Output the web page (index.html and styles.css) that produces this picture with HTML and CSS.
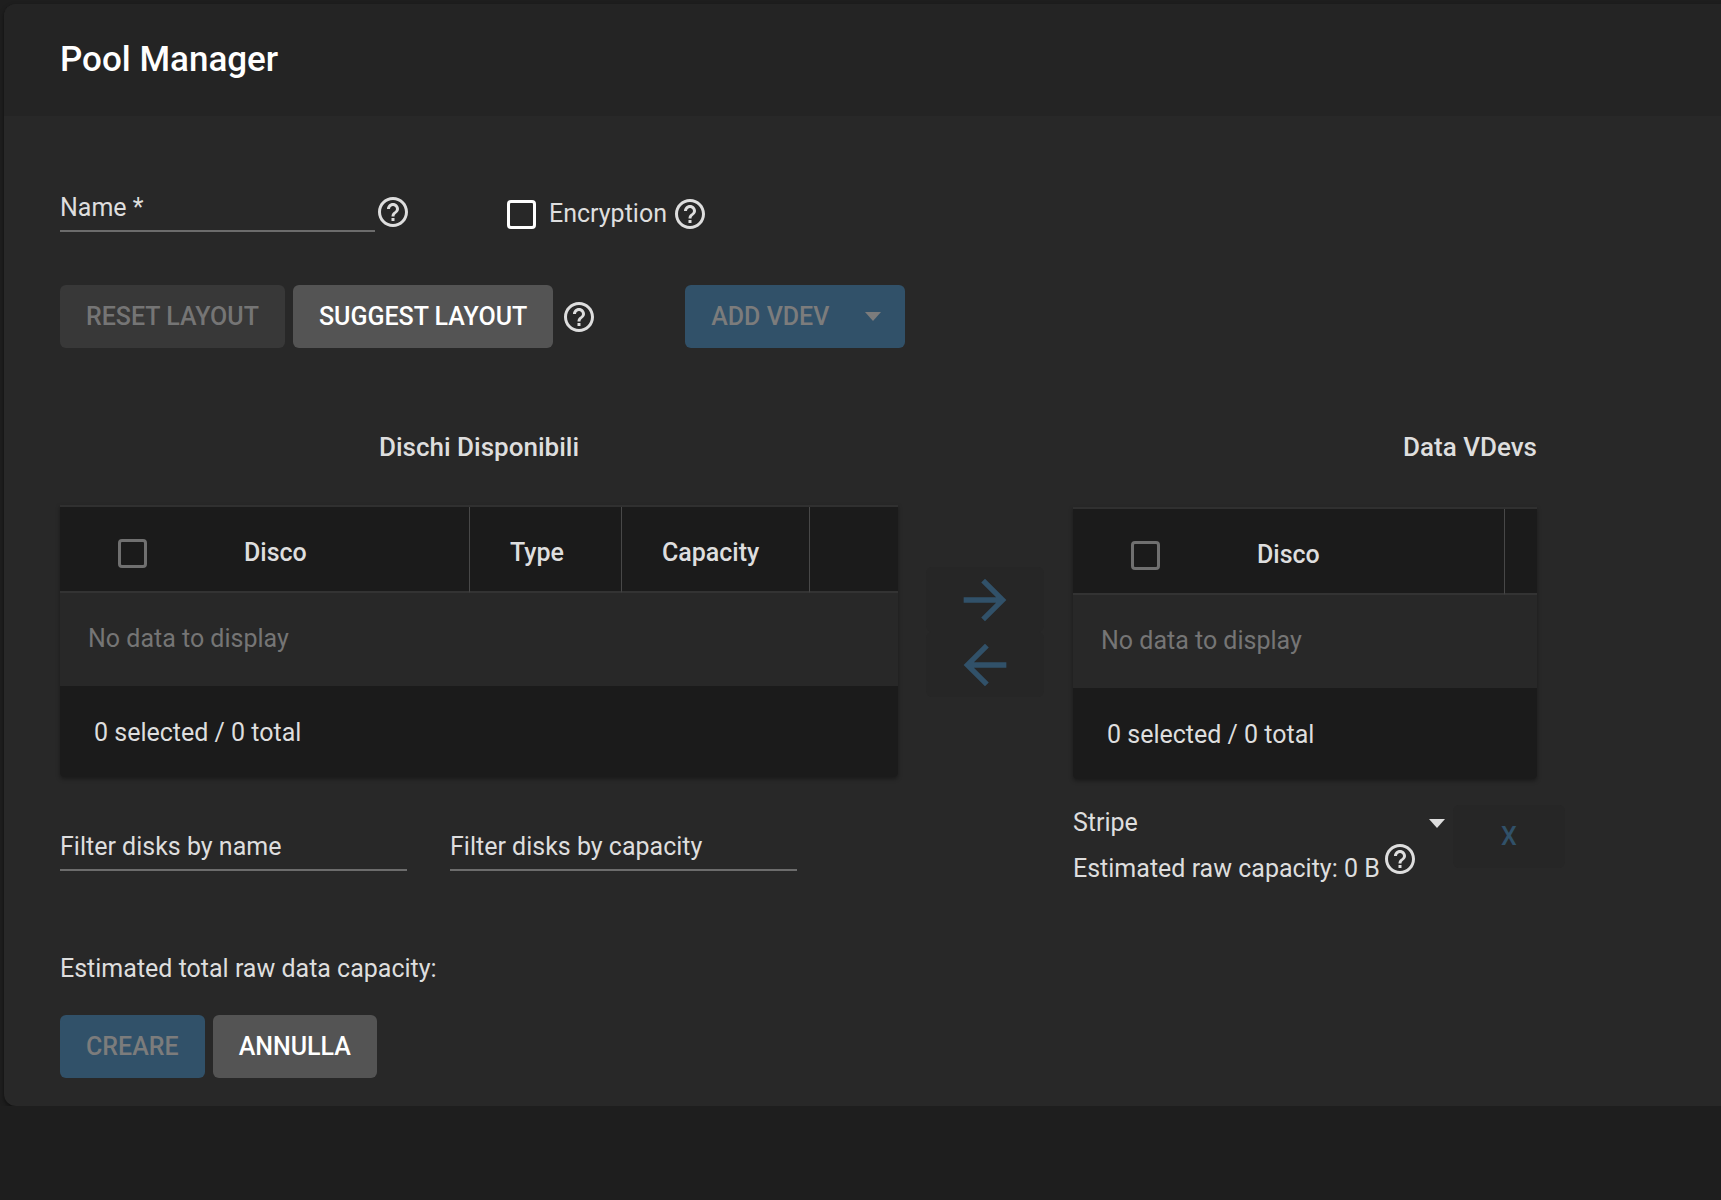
FILE: index.html
```html
<!DOCTYPE html>
<html lang="it">
<head>
<meta charset="utf-8">
<meta name="viewport" content="width=device-width, initial-scale=1">
<title>Pool Manager</title>
<link rel="stylesheet" href="styles.css">
</head>
<body>
<svg class="sprite" aria-hidden="true">
  <symbol id="help" viewBox="0 0 24 24"><path d="M11 18h2v-2h-2v2zm1-16C6.48 2 2 6.48 2 12s4.48 10 10 10 10-4.48 10-10S17.52 2 12 2zm0 18c-4.41 0-8-3.59-8-8s3.59-8 8-8 8 3.59 8 8-3.59 8-8 8zm0-14c-2.21 0-4 1.79-4 4h2c0-1.1.9-2 2-2s2 .9 2 2c0 2-3 1.75-3 5h2c0-2.25 3-2.5 3-5 0-2.21-1.79-4-4-4z"/></symbol>
  <symbol id="forward" viewBox="0 0 24 24"><path d="M12 4l-1.41 1.41L16.17 11H4v2h12.17l-5.58 5.59L12 20l8-8z"/></symbol>
  <symbol id="back" viewBox="0 0 24 24"><path d="M20 11H7.83l5.59-5.59L12 4l-8 8 8 8 1.41-1.41L7.83 13H20v-2z"/></symbol>
</svg>
<main class="card">
  <header class="card-header"><h1 class="title">Pool Manager</h1></header>
  <form class="card-body">
    <div class="name-row">
      <div class="field name-field">
        <label class="field-label" for="name">Name *</label>
        <input class="field-input" id="name" type="text" required>
      </div>
      <button class="help" type="button" aria-label="Name"><svg class="help-icon"><use href="#help"/></svg></button>
      <div class="encryption">
        <input class="check check-bright" id="encryption" type="checkbox">
        <label class="check-label" for="encryption">Encryption</label>
        <button class="help" type="button" aria-label="Encryption"><svg class="help-icon"><use href="#help"/></svg></button>
      </div>
    </div>

    <div class="layout-row">
      <button class="btn btn-muted" type="button" disabled>RESET LAYOUT</button>
      <button class="btn btn-default" type="button">SUGGEST LAYOUT</button>
      <button class="help" type="button" aria-label="Suggest layout"><svg class="help-icon"><use href="#help"/></svg></button>
      <button class="btn btn-primary add-vdev" type="button" disabled>ADD VDEV <span class="caret"></span></button>
    </div>

    <div class="panels">
      <section class="panel">
        <h2 class="panel-title">Dischi Disponibili</h2>
        <table class="disks">
          <colgroup><col class="col-disk"><col class="col-type"><col class="col-capacity"><col></colgroup>
          <thead>
            <tr>
              <th><div class="head-cell"><input class="check" type="checkbox" aria-label="Disco"><span>Disco</span></div></th>
              <th>Type</th>
              <th>Capacity</th>
              <th></th>
            </tr>
          </thead>
          <tbody><tr><td colspan="4">No data to display</td></tr></tbody>
          <tfoot><tr><td colspan="4">0 selected / 0 total</td></tr></tfoot>
        </table>
        <div class="filters">
          <div class="field">
            <label class="field-label" for="filter-name">Filter disks by name</label>
            <input class="field-input" id="filter-name" type="text">
          </div>
          <div class="field">
            <label class="field-label" for="filter-capacity">Filter disks by capacity</label>
            <input class="field-input" id="filter-capacity" type="text">
          </div>
        </div>
      </section>

      <div class="movers">
        <button class="mover" type="button" aria-label="Add" disabled><svg class="mover-icon"><use href="#forward"/></svg></button>
        <button class="mover" type="button" aria-label="Remove" disabled><svg class="mover-icon"><use href="#back"/></svg></button>
      </div>

      <section class="panel vdevs">
        <h2 class="panel-title">Data VDevs</h2>
        <table class="disks">
          <colgroup><col class="col-vdev-disk"><col></colgroup>
          <thead>
            <tr>
              <th><div class="head-cell"><input class="check" type="checkbox" aria-label="Disco"><span>Disco</span></div></th>
              <th></th>
            </tr>
          </thead>
          <tbody><tr><td colspan="2">No data to display</td></tr></tbody>
          <tfoot><tr><td colspan="2">0 selected / 0 total</td></tr></tfoot>
        </table>
        <div class="vdev-footer">
          <div class="vdev-info">
            <div class="select-wrap">
              <select class="select" aria-label="Data VDevs"><option>Stripe</option></select>
              <span class="caret"></span>
            </div>
            <div class="raw-capacity">
              <span>Estimated raw capacity: 0 B</span>
              <button class="help" type="button" aria-label="Estimated raw capacity"><svg class="help-icon"><use href="#help"/></svg></button>
            </div>
          </div>
          <button class="btn remove" type="button" disabled>X</button>
        </div>
      </section>
    </div>

    <p class="total">Estimated total raw data capacity:</p>
    <div class="actions">
      <button class="btn btn-primary" type="submit" disabled>CREARE</button>
      <button class="btn btn-default" type="button">ANNULLA</button>
    </div>
  </form>
</main>
</body>
</html>
```
FILE: styles.css
```css
* { box-sizing: border-box; }

body {
  margin: 0;
  padding: 4px 0 0 4px;
  background: #1e1e1e;
  color: #dedede;
  font: 400 25px/32px Roboto, "Liberation Sans", sans-serif;
}

button, input, select { font: inherit; color: inherit; margin: 0; }

.sprite { display: none; }

.card {
  background: #282828;
  border-radius: 12px 0 0 12px;
  box-shadow: 0 2px 4px rgba(0, 0, 0, .5);
}

.card-header {
  padding: 34px 56px;
  background: #242424;
  border-radius: 12px 0 0 0;
}

.title {
  margin: 0;
  color: #fff;
  font-size: 35px;
  font-weight: 500;
  line-height: 44px;
}

.card-body { padding: 64px 184px 28px 56px; }

/* Underlined text fields: the label rests over the empty input */
.field { display: grid; border-bottom: 2px solid #6c6c6c; }
.field-label, .field-input { grid-area: 1 / 1; }
.field-label { padding: 12px 0 6px; pointer-events: none; }
.field-input { width: 100%; padding: 0; border: 0; background: none; outline: 0; }

.name-row { display: flex; align-items: flex-end; }
.name-field { width: 315px; }

.help {
  display: block;
  padding: 0;
  border: 0;
  background: none;
  color: #dedede;
}
.help-icon { display: block; width: 36px; height: 36px; fill: currentColor; }
.name-row > .help { margin: 0 96px 2px 0; }

.encryption { display: flex; align-items: center; }
.check {
  appearance: none;
  flex: none;
  width: 29px;
  height: 29px;
  border: 3px solid #707070;
  border-radius: 4px;
}
.check-bright { border-color: #fff; }
.check-label { padding: 0 5px 0 13px; }

.layout-row { display: flex; align-items: center; gap: 8px; margin-top: 53px; }

.btn {
  height: 63px;
  padding: 0 26px;
  border: 0;
  border-radius: 6px;
  font-weight: 500;
  white-space: nowrap;
}
.btn-default { background: #545454; color: #fff; }
.btn-muted { background: #383838; color: #757575; }
.btn-primary { background: #315169; color: #7c7c7c; }
.add-vdev { display: flex; align-items: center; gap: 36px; padding-right: 24px; margin-left: 80px; }

.caret {
  flex: none;
  width: 0;
  border: 8px solid transparent;
  border-top: 9px solid currentColor;
  border-bottom: 0;
}

.panels {
  display: grid;
  grid-template-columns: 838fr 175px 464fr;
  margin-top: 83px;
}

.panel-title {
  margin: 0 0 42px;
  font-size: 26px;
  font-weight: 500;
  line-height: 32px;
  text-align: center;
}
.vdevs .panel-title { margin-bottom: 44px; text-align: right; }

.disks {
  width: 100%;
  table-layout: fixed;
  border-spacing: 0;
  border-top: 2px solid #303030;
  border-radius: 0 0 4px 4px;
  box-shadow: 0 2px 4px rgba(0, 0, 0, .35);
}
.disks th {
  height: 86px;
  padding: 8px 0 0 40px;
  background: #1b1b1b;
  border-right: 1px solid #484848;
  border-bottom: 2px solid #333;
  font-weight: 500;
  text-align: left;
}
.disks th:first-child { padding-left: 58px; }
.disks th:last-child { border-right: 0; }
.disks tbody td { height: 93px; padding: 0 28px 2px; color: #757575; }
.disks tfoot td { height: 91px; padding: 2px 34px 0; background: #1b1b1b; border-radius: 0 0 4px 4px; }
.col-disk { width: 410px; }
.col-type { width: 152px; }
.col-capacity { width: 188px; }
.col-vdev-disk { width: 93%; }
.head-cell { display: flex; align-items: center; gap: 97px; }

.filters { display: flex; gap: 43px; margin-top: 42px; }
.filters .field { width: 347px; }

.movers { padding: 136px 0 0 28px; }
.mover {
  display: flex;
  align-items: center;
  justify-content: center;
  width: 118px;
  height: 65px;
  padding: 0;
  border: 0;
  border-radius: 6px;
  background: #262626;
  color: #315169;
}
.mover-icon { width: 64px; height: 64px; fill: currentColor; }

.vdev-footer { display: flex; align-items: flex-start; gap: 8px; margin: 26px -28px 0 0; }
.vdev-info { flex: 1; padding-top: 2px; }
.select-wrap { display: flex; align-items: center; }
.select {
  flex: 1;
  appearance: none;
  height: 32px;
  padding: 0;
  border: 0;
  background: none;
}
.raw-capacity { display: flex; align-items: flex-end; gap: 2px; }
.raw-capacity > span { padding-top: 14px; white-space: nowrap; }
.raw-capacity .help { padding-bottom: 8px; }
.remove { width: 112px; background: #262626; color: #315169; }

.total { margin: 68px 0 30px; }
.actions { display: flex; gap: 8px; }
```
